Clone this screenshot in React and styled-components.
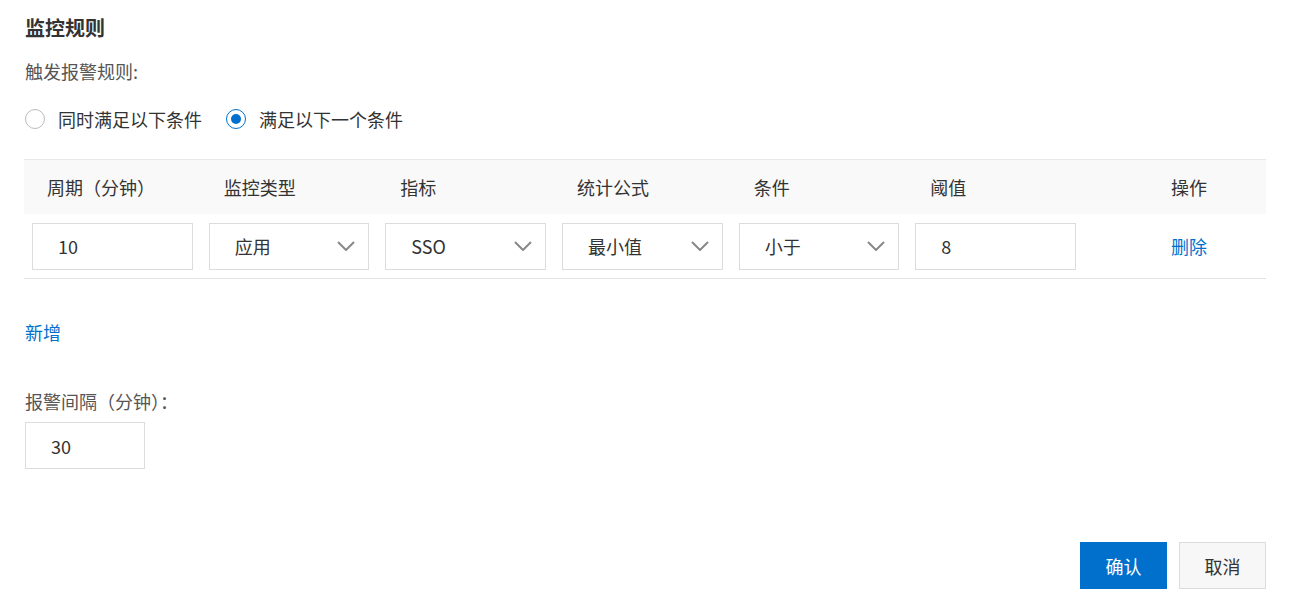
import React from "react";
import styled, { createGlobalStyle } from "styled-components";

const GlobalStyle = createGlobalStyle`
  body {
    margin: 0;
    background: #fff;
    font-family: "Noto Sans CJK SC", "Liberation Sans", sans-serif;
    color: #333;
  }
`;

const blue = "#0070cc";

const Page = styled.div`
  padding: 16px 23px 18px 24px;
  display: flex;
  flex-direction: column;
`;

const Title = styled.h2`
  margin: 0 0 0 1px;
  font-size: 20px;
  font-weight: bold;
  line-height: 24px;
  color: #333;
`;

const Label = styled.div`
  margin: ${(p) => p.$top || 0}px 0 0 1px;
  font-size: 18px;
  line-height: 24px;
  color: #555;
`;

const RadioGroup = styled.div`
  margin: 24px 0 0 1px;
  display: flex;
  align-items: center;
  gap: 24px;
  height: 24px;
`;

const RadioItem = styled.label`
  display: flex;
  align-items: center;
  gap: 13px;
  font-size: 18px;
  line-height: 24px;
  color: #333;
`;

const Circle = styled.span`
  width: 20px;
  height: 20px;
  box-sizing: border-box;
  border-radius: 50%;
  border: 1px solid ${(p) => (p.$checked ? blue : "#bbb")};
  display: flex;
  align-items: center;
  justify-content: center;

  &::after {
    content: "";
    width: 10px;
    height: 10px;
    border-radius: 50%;
    background: ${blue};
    display: ${(p) => (p.$checked ? "block" : "none")};
  }
`;

const Table = styled.div`
  margin-top: 28px;
  display: grid;
  grid-template-columns: repeat(6, 1fr) 182px;
  border-top: 1px solid #e8e8e8;
  border-bottom: 1px solid #e2e2e2;
`;

const HeadCell = styled.div`
  height: 54px;
  background: #f9f9f9;
  display: flex;
  align-items: center;
  padding-left: ${(p) => (p.$action ? 87 : 23)}px;
  font-size: 18px;
  color: #333;
`;

const Cell = styled.div`
  height: 64px;
  display: flex;
  align-items: center;
  padding: 0 ${(p) => (p.$action ? 0 : 8)}px 0 ${(p) => (p.$action ? 87 : 8)}px;
`;

const Field = styled.div`
  width: ${(p) => p.$width || "100%"};
  height: 47px;
  box-sizing: border-box;
  border: 1px solid #dcdcdc;
  background: #fff;
  display: flex;
  align-items: center;
  justify-content: space-between;
  padding: 0 13px 0 25px;
  font-size: 18px;
  color: #333;
`;

const Link = styled.a`
  font-size: 18px;
  line-height: 24px;
  color: ${blue};
  cursor: pointer;
`;

const AddLink = styled(Link)`
  margin: 41px 0 0 1px;
  align-self: flex-start;
`;

const IntervalField = styled(Field)`
  margin: 9px 0 0 1px;
`;

const Footer = styled.div`
  margin-top: 73px;
  display: flex;
  justify-content: flex-end;
  gap: 12px;
`;

const Button = styled.button`
  width: 87px;
  height: 47px;
  box-sizing: border-box;
  font-family: inherit;
  font-size: 18px;
  border: 1px solid ${(p) => (p.$primary ? blue : "#dcdcdc")};
  background: ${(p) => (p.$primary ? blue : "#f7f7f7")};
  color: ${(p) => (p.$primary ? "#fff" : "#333")};
  cursor: pointer;
`;

const Chevron = () => (
  <svg width="18" height="10" viewBox="0 0 18 10" fill="none">
    <path d="M1 1 L9 9 L17 1" stroke="#888" strokeWidth="2" />
  </svg>
);

const headers = ["周期（分钟）", "监控类型", "指标", "统计公式", "条件", "阈值"];
const row = [
  { value: "10" },
  { value: "应用", select: true },
  { value: "SSO", select: true },
  { value: "最小值", select: true },
  { value: "小于", select: true },
  { value: "8" },
];

export default function App() {
  return (
    <Page>
      <GlobalStyle />
      <Title>监控规则</Title>
      <Label $top={19}>触发报警规则:</Label>
      <RadioGroup>
        <RadioItem>
          <Circle />
          同时满足以下条件
        </RadioItem>
        <RadioItem>
          <Circle $checked />
          满足以下一个条件
        </RadioItem>
      </RadioGroup>

      <Table>
        {headers.map((h) => (
          <HeadCell key={h}>{h}</HeadCell>
        ))}
        <HeadCell $action>操作</HeadCell>
        {row.map((c, i) => (
          <Cell key={i}>
            <Field>
              <span>{c.value}</span>
              {c.select && <Chevron />}
            </Field>
          </Cell>
        ))}
        <Cell $action>
          <Link>删除</Link>
        </Cell>
      </Table>

      <AddLink>新增</AddLink>

      <Label $top={45}>报警间隔（分钟）：</Label>
      <IntervalField $width="120px">30</IntervalField>

      <Footer>
        <Button $primary>确认</Button>
        <Button>取消</Button>
      </Footer>
    </Page>
  );
}
